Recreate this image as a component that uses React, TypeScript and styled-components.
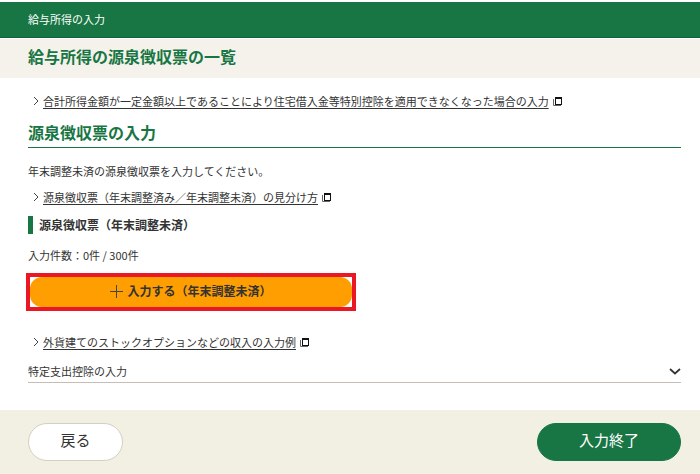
import React from 'react';
import styled, { createGlobalStyle } from 'styled-components';

const GlobalStyle = createGlobalStyle`
  *, *::before, *::after { box-sizing: border-box; }
  body {
    margin: 0;
    background: #fff;
    color: #333;
    font: 11px/18px "Noto Sans CJK JP", sans-serif;
  }
  h1, h2, h3, p { margin: 0; }
  button { font: inherit; cursor: pointer; }
`;

const Page = styled.div`
  padding-top: 2px;
`;

const TopBar = styled.header`
  padding: 8px 28px 9px;
  background: #187644;
  border-bottom: 1px solid #086735;
  color: #fff;
`;

const TitleBand = styled.div`
  margin-top: 1px;
  padding: 5px 28px 10px;
  background: #f5f2eb;
`;

const Title = styled.h1`
  color: #187644;
  font-size: 16px;
  line-height: 24px;
`;

const Main = styled.main`
  display: flex;
  flex-direction: column;
  align-items: stretch;
  padding: 14px 19px 27px 28px;
`;

const LinkRow = styled.p`
  display: flex;
  align-items: center;
  gap: 4px;
  padding-left: 5px;
`;

const TextLink = styled.a`
  color: #333;
  text-decoration: underline;
  text-underline-offset: 2px;
  white-space: nowrap;
`;

const SectionTitle = styled.h2`
  margin-top: 10px;
  padding-bottom: 3px;
  border-bottom: 1px solid #187644;
  color: #187644;
  font-size: 16px;
  line-height: 24px;
`;

const Lead = styled.p`
  margin: 14px 0 8px;
`;

const SubTitle = styled.h3`
  margin-top: 10px;
  padding-left: 6px;
  border-left: 5px solid #187644;
  font-size: 12px;
  line-height: 18px;
`;

const Count = styled.p`
  margin-top: 12px;
`;

const Highlight = styled.div`
  align-self: flex-start;
  width: 330px;
  max-width: 100%;
  margin: 9px 0 22px -2px;
  border: 4px solid #ec1724;
`;

const AddButton = styled.button`
  display: flex;
  align-items: center;
  justify-content: center;
  gap: 4px;
  width: 100%;
  height: 30px;
  padding: 0 0 2px;
  border: 0;
  border-radius: 12px;
  background: #ff9e00;
  color: #333;
  font-size: 12px;
  font-weight: 700;
`;

const Accordion = styled.button`
  display: flex;
  align-items: center;
  justify-content: space-between;
  margin-top: 11px;
  padding: 0 0 2px;
  border: 0;
  border-bottom: 1px solid #c6bdb4;
  background: none;
  color: #333;
  text-align: left;
`;

const Footer = styled.footer`
  display: flex;
  justify-content: space-between;
  padding: 13px 19px 13px 28px;
  background: #f2efe3;
`;

const FooterButton = styled.button<{ $primary?: boolean }>`
  width: ${(p) => (p.$primary ? 144 : 95)}px;
  height: 38px;
  padding: 0 0 4px;
  border: 1px solid ${(p) => (p.$primary ? '#187644' : '#d6cec2')};
  border-radius: 19px;
  background: ${(p) => (p.$primary ? '#187644' : '#fff')};
  color: ${(p) => (p.$primary ? '#fff' : '#333')};
  font-size: 15px;
  line-height: 22px;
`;

const Arrow = () => (
  <svg width="6" height="10" viewBox="0 0 6 10" fill="none" stroke="#444" aria-hidden="true">
    <path d="M1 1l4 4-4 4" />
  </svg>
);

const NewWindow = () => (
  <svg width="9" height="9" viewBox="0 0 9 9" aria-hidden="true">
    <path d="M0.5 2v6.5H8" fill="none" stroke="#666" />
    <path d="M2 0h7v8H2z" fill="#111" />
    <path d="M3 2h5v5H3z" fill="#fff" />
  </svg>
);

const Plus = () => (
  <svg width="13" height="13" viewBox="0 0 13 13" stroke="#444" aria-hidden="true">
    <path d="M6.5 0v13M0 6.5h13" />
  </svg>
);

const Chevron = () => (
  <svg width="12" height="7" viewBox="0 0 12 7" fill="none" stroke="#333" strokeWidth="1.7" aria-hidden="true">
    <path d="M1 1l5 4.5L11 1" />
  </svg>
);

const HelpLink = ({ children }: { children: React.ReactNode }) => (
  <LinkRow>
    <Arrow />
    <TextLink href="#">{children}</TextLink>
    <NewWindow />
  </LinkRow>
);

export default function App() {
  return (
    <Page>
      <GlobalStyle />
      <TopBar>給与所得の入力</TopBar>
      <TitleBand>
        <Title>給与所得の源泉徴収票の一覧</Title>
      </TitleBand>
      <Main>
        <HelpLink>
          合計所得金額が一定金額以上であることにより住宅借入金等特別控除を適用できなくなった場合の入力
        </HelpLink>
        <SectionTitle>源泉徴収票の入力</SectionTitle>
        <Lead>年末調整未済の源泉徴収票を入力してください。</Lead>
        <HelpLink>源泉徴収票（年末調整済み／年末調整未済）の見分け方</HelpLink>
        <SubTitle>源泉徴収票（年末調整未済）</SubTitle>
        <Count>入力件数：0件 / 300件</Count>
        <Highlight>
          <AddButton type="button">
            <Plus />
            入力する（年末調整未済）
          </AddButton>
        </Highlight>
        <HelpLink>外貨建てのストックオプションなどの収入の入力例</HelpLink>
        <Accordion type="button" aria-expanded="false">
          特定支出控除の入力
          <Chevron />
        </Accordion>
      </Main>
      <Footer>
        <FooterButton type="button">戻る</FooterButton>
        <FooterButton type="button" $primary>
          入力終了
        </FooterButton>
      </Footer>
    </Page>
  );
}
